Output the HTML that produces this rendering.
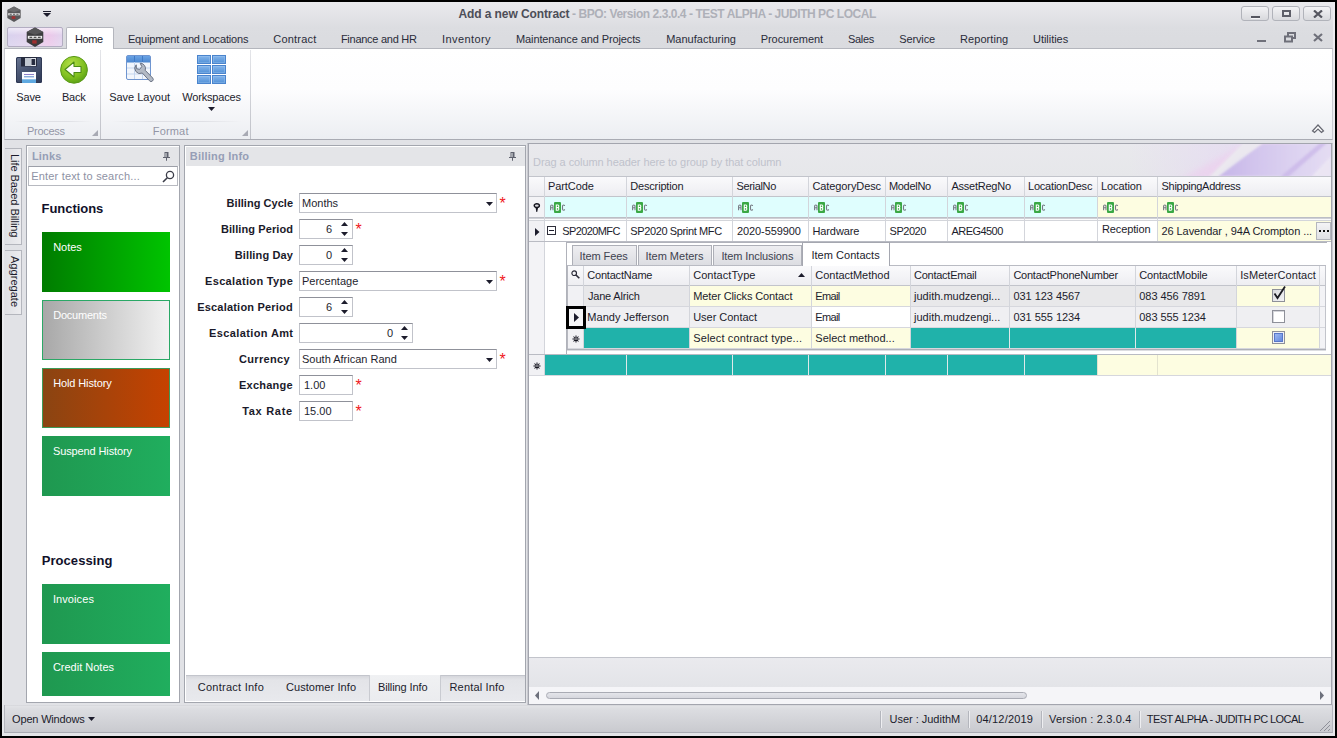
<!DOCTYPE html>
<html><head><meta charset="utf-8">
<style>
*{box-sizing:border-box;margin:0;padding:0}
html,body{width:1337px;height:738px;overflow:hidden;background:#000}
body{font-family:"Liberation Sans",sans-serif;font-size:11px;color:#1e1e2e;position:relative}
.a{position:absolute}
.t{position:absolute;white-space:nowrap;line-height:14px}
#win{left:0;top:0;width:1337px;height:738px;background:#e1e2e6;overflow:hidden}
.blk{position:absolute;background:#000;z-index:50}
#title{left:0;top:0;width:1337px;height:28px;background:linear-gradient(#ebebee,#dcdde1)}
#tabs{left:0;top:28px;width:1337px;height:21px;background:linear-gradient(#dcdde1,#dadbdf)}
#ribbon{left:4px;top:48px;width:1329px;height:92px;background:linear-gradient(#ffffff 0%,#fdfdfe 45%,#eceef2 100%);border:1px solid #b4b6bd;border-left-color:#c9cbd1;border-right-color:#c9cbd1;border-bottom-color:#a9abb3}
.panel{position:absolute;background:#fff;border:1px solid #a3a6ae}
.phead{position:absolute;left:1px;top:1px;right:0;height:19px;background:#e4e5e8}
.phead b{position:absolute;left:5px;top:2px;line-height:14px;color:#969eb6;font-size:11px}
.lbl{position:absolute;white-space:nowrap;font-weight:bold;line-height:14px;color:#1a1a2a}
.inp{position:absolute;background:#fff;border:1px solid #c1c3ca;border-top-color:#8f919a;height:20px}
.inp span{position:absolute;top:2px;line-height:14px;white-space:nowrap}
.star{position:absolute;color:#f01822;font-weight:normal;font-size:16px;line-height:16px}
.tile{position:absolute;left:15px;width:128px;height:60px;color:#fff;font-size:11px}
.tile span{position:absolute;left:11px;top:8px;line-height:14px;white-space:nowrap}
.mt{position:absolute;top:32px;line-height:14px;white-space:nowrap;color:#2a2c3a;font-size:11px}
.wb{top:6px;width:28px;height:15px;border:1px solid #b1b3ba;border-radius:3px;background:linear-gradient(#f3f3f5,#d8d9dd)}
.wb i{position:absolute;background:#55565f}
.sep{top:711px;width:2px;height:17px;border-left:1px solid #b4b6bd;border-right:1px solid #eeeef1}
#tt1{letter-spacing:-0.094px;margin-left:-0.50px}
#tt2{letter-spacing:-0.453px;margin-left:0.00px}
#m0{letter-spacing:-0.386px;margin-left:-0.10px}
#m1{letter-spacing:-0.163px;margin-left:-0.10px}
#m2{letter-spacing:0.203px;margin-left:0.30px}
#m3{letter-spacing:-0.264px;margin-left:-0.10px}
#m4{letter-spacing:0.406px;margin-left:0.00px}
#m5{letter-spacing:-0.112px;margin-left:0.00px}
#m6{letter-spacing:0.006px;margin-left:0.20px}
#m7{letter-spacing:-0.062px;margin-left:-0.30px}
#m8{letter-spacing:-0.346px;margin-left:-0.90px}
#m9{letter-spacing:-0.127px;margin-left:-0.80px}
#m10{letter-spacing:0.066px;margin-left:-1.00px}
#m11{letter-spacing:-0.039px;margin-left:-1.00px}
#r1{letter-spacing:-0.120px;margin-left:0.20px}
#r2{letter-spacing:-0.267px;margin-left:0.00px}
#r3{letter-spacing:-0.023px;margin-left:0.20px}
#r4{letter-spacing:-0.193px;margin-left:0.30px}
#g1{letter-spacing:-0.279px;margin-left:0.00px}
#g2{letter-spacing:0.159px;margin-left:-0.20px}
#ph1{letter-spacing:0.153px;margin-left:-1.00px}
#se{letter-spacing:0.184px;margin-left:0.20px}
#h1{letter-spacing:-0.034px;margin-left:-0.50px}
#t1{letter-spacing:-0.030px;margin-left:0.20px}
#t2{letter-spacing:-0.216px;margin-left:0.20px}
#t3{letter-spacing:-0.117px;margin-left:0.20px}
#t4{letter-spacing:-0.108px;margin-left:-0.10px}
#h2{letter-spacing:0.061px;margin-left:-0.30px}
#t5{letter-spacing:0.093px;margin-left:-0.10px}
#t6{letter-spacing:-0.003px;margin-left:-0.10px}
#ph2{letter-spacing:0.231px;margin-left:-1.30px}
#l0{letter-spacing:0.036px;margin-left:21.60px}
#l1{letter-spacing:0.092px;margin-left:15.90px}
#l2{letter-spacing:0.141px;margin-left:29.70px}
#l3{letter-spacing:0.344px;margin-left:0.00px}
#l4{letter-spacing:0.199px;margin-left:-7.80px}
#l5{letter-spacing:0.374px;margin-left:4.10px}
#l6{letter-spacing:0.325px;margin-left:34.00px}
#l7{letter-spacing:0.241px;margin-left:34.00px}
#l8{letter-spacing:0.707px;margin-left:37.20px}
#b1{letter-spacing:0.247px;margin-left:-0.20px}
#b2{letter-spacing:0.085px;margin-left:-0.10px}
#b3{letter-spacing:-0.097px;margin-left:-0.10px}
#b4{letter-spacing:0.163px;margin-left:-0.50px}
#gp{letter-spacing:-0.076px;margin-left:0.10px}
#mh1{letter-spacing:-0.073px;margin-left:-0.10px}
#mh2{letter-spacing:-0.157px;margin-left:0.20px}
#mh3{letter-spacing:-0.323px;margin-left:0.40px}
#mh4{letter-spacing:-0.092px;margin-left:0.40px}
#mh5{letter-spacing:-0.290px;margin-left:-0.10px}
#mh6{letter-spacing:-0.247px;margin-left:0.50px}
#mh7{letter-spacing:-0.205px;margin-left:0.00px}
#mh8{letter-spacing:-0.099px;margin-left:0.00px}
#mh9{letter-spacing:-0.278px;margin-left:0.50px}
#md1{letter-spacing:-0.598px;margin-left:0.20px}
#md2{letter-spacing:-0.366px;margin-left:0.20px}
#md3{letter-spacing:-0.095px;margin-left:1.00px}
#md4{letter-spacing:-0.086px;margin-left:0.40px}
#md5{letter-spacing:-0.459px;margin-left:0.50px}
#md6{letter-spacing:-0.557px;margin-left:0.50px}
#md8{letter-spacing:-0.105px;margin-left:0.90px}
#md9{letter-spacing:-0.076px;margin-left:0.50px}
#dt0{letter-spacing:-0.067px;margin-left:0.50px}
#dt1{letter-spacing:0.002px;margin-left:0.40px}
#dt2{letter-spacing:-0.098px;margin-left:1.40px}
#dt3{letter-spacing:0.034px;margin-left:0.40px}
#dh1{letter-spacing:-0.206px;margin-left:0.30px}
#dh2{letter-spacing:0.049px;margin-left:0.20px}
#dh3{letter-spacing:-0.031px;margin-left:0.30px}
#dh4{letter-spacing:-0.252px;margin-left:0.00px}
#dh5{letter-spacing:-0.241px;margin-left:0.40px}
#dh6{letter-spacing:-0.171px;margin-left:0.30px}
#dh7{letter-spacing:0.086px;margin-left:0.20px}
#dd0_1{letter-spacing:-0.174px;margin-left:0.90px}
#dd0_2{letter-spacing:-0.114px;margin-left:0.20px}
#dd0_3{letter-spacing:-0.663px;margin-left:0.30px}
#dd0_4{letter-spacing:0.005px;margin-left:0.00px}
#dd0_5{letter-spacing:-0.041px;margin-left:0.40px}
#dd0_6{letter-spacing:-0.058px;margin-left:0.30px}
#dd1_1{letter-spacing:0.025px;margin-left:0.30px}
#dd1_2{letter-spacing:-0.025px;margin-left:0.20px}
#dd1_3{letter-spacing:-0.663px;margin-left:0.30px}
#dd1_4{letter-spacing:0.005px;margin-left:0.00px}
#dd1_5{letter-spacing:-0.041px;margin-left:0.40px}
#dd1_6{letter-spacing:-0.058px;margin-left:0.30px}
#dd2_2{letter-spacing:0.140px;margin-left:0.20px}
#dd2_3{letter-spacing:-0.006px;margin-left:0.30px}
#s0{letter-spacing:-0.183px;margin-left:0.10px}
#s1{letter-spacing:-0.016px;margin-left:-0.50px}
#s2{letter-spacing:0.184px;margin-left:-0.80px}
#s3{letter-spacing:0.171px;margin-left:-0.90px}
#s4{letter-spacing:-0.560px;margin-left:-0.20px}
#v1{letter-spacing:-0.055px;margin-top:-0.90px}
#v2{letter-spacing:0.037px;margin-top:-1.70px}
</style></head><body>
<div id="win" class="a">
<div class="blk" style="left:0;top:0;width:1337px;height:2px"></div>
<div class="blk" style="left:0;top:0;width:2px;height:738px"></div>
<div class="blk" style="left:1335px;top:0;width:2px;height:738px"></div>
<div class="blk" style="left:0;top:736px;width:1337px;height:2px"></div>
<div id="title" class="a"></div>
<div id="tabs" class="a"></div>
<!-- app icon -->
<svg class="a" style="left:6px;top:5.5px" width="16" height="17" viewBox="0 0 18 19"><polygon points="9,0.5 16.5,4.5 16.5,13.5 9,18 1.5,13.5 1.5,4.5" fill="#58585a"/><polygon points="9,0.5 16.5,4.5 9,7 1.5,4.5" fill="#6c6c6e"/><rect x="2.5" y="8" width="13" height="2.4" fill="#e8e8e8"/><rect x="4" y="8.7" width="2.5" height="1" fill="#444"/><rect x="7.8" y="8.7" width="2.5" height="1" fill="#444"/><rect x="11.6" y="8.7" width="2.5" height="1" fill="#444"/><rect x="6.5" y="11.5" width="4" height="3" fill="#a03030"/></svg>
<!-- qat arrow -->
<div class="a" style="left:43px;top:11px;width:8px;height:1px;background:#1c1c2c"></div>
<div class="a" style="left:43px;top:13px;width:0;height:0;border-left:4px solid transparent;border-right:4px solid transparent;border-top:4px solid #1c1c2c"></div>
<!-- title text -->
<div class="t" style="left:459px;top:7px;font-size:12px;font-weight:bold;color:#4d4e58" id="tt1">Add a new Contract</div>
<div class="t" style="left:572px;top:7px;font-size:12px;font-weight:bold;color:#aeb0b8" id="tt2">- BPO: Version 2.3.0.4 - TEST ALPHA - JUDITH PC LOCAL</div>
<!-- window buttons -->
<div class="a wb" style="left:1241px"><i style="left:9px;top:9px;width:9px;height:2px;box-shadow:0 1px 0 #f4f4f6"></i></div>
<div class="a wb" style="left:1272px"><i style="left:9px;top:3px;width:9px;height:7px;background:none;border:2px solid #5d5e68"></i></div>
<div class="a wb" style="left:1303px"><svg class="a" style="left:9px;top:3px" width="10" height="8" viewBox="0 0 10 8"><path d="M1 0.5 L9 7.5 M9 0.5 L1 7.5" stroke="#55565f" stroke-width="2.2"/></svg></div>
<!-- mdi buttons -->
<div class="a" style="left:1257px;top:40px;width:9px;height:2px;background:#6f707a"></div>
<svg class="a" style="left:1284px;top:32px" width="12" height="11" viewBox="0 0 12 11"><rect x="4" y="1" width="7" height="5" fill="none" stroke="#6f707a" stroke-width="2"/><rect x="1" y="4.5" width="7" height="5" fill="#dbdce0" stroke="#6f707a" stroke-width="2"/></svg>
<svg class="a" style="left:1313px;top:33px" width="10" height="9" viewBox="0 0 10 9"><path d="M1 1 L9 8 M9 1 L1 8" stroke="#6f707a" stroke-width="2.2"/></svg>
<!-- app button -->
<div class="a" style="left:7px;top:27px;width:56px;height:20px;border:1px solid #b3adc2;border-radius:2px;background:linear-gradient(90deg,#d9d2ee 0%,#e3d3ee 45%,#ecc8ea 75%,#e2d4ee 100%)"></div>
<div class="a" style="left:8px;top:28px;width:54px;height:18px;border-radius:2px;background:linear-gradient(rgba(255,255,255,.55),rgba(255,255,255,0) 40%,rgba(255,255,255,.15))"></div>
<svg class="a" style="left:25px;top:27px" width="20" height="21" viewBox="0 0 18 19"><polygon points="9,0.5 16.5,4.5 16.5,13.5 9,18 1.5,13.5 1.5,4.5" fill="#3c3c3e"/><polygon points="9,0.5 16.5,4.5 9,7 1.5,4.5" fill="#555557"/><rect x="2.5" y="8" width="13" height="2.6" fill="#f0f0f0"/><rect x="4" y="8.8" width="2.5" height="1" fill="#333"/><rect x="7.8" y="8.8" width="2.5" height="1" fill="#333"/><rect x="11.6" y="8.8" width="2.5" height="1" fill="#333"/><rect x="6.5" y="12" width="4" height="3" fill="#a03030"/></svg>
<!-- ribbon body -->
<div id="ribbon" class="a"></div>
<!-- Home tab -->
<div class="a" style="left:66px;top:27px;width:48px;height:22px;background:#fff;border:1px solid #b4b6bd;border-bottom:none;border-radius:2px 2px 0 0"></div>
<div class="mt" style="left:75px;color:#1c1c2c" id="m0">Home</div>
<div class="mt" style="left:128px" id="m1">Equipment and Locations</div>
<div class="mt" style="left:273px" id="m2">Contract</div>
<div class="mt" style="left:341px" id="m3">Finance and HR</div>
<div class="mt" style="left:442px" id="m4">Inventory</div>
<div class="mt" style="left:516px" id="m5">Maintenance and Projects</div>
<div class="mt" style="left:666px" id="m6">Manufacturing</div>
<div class="mt" style="left:761px" id="m7">Procurement</div>
<div class="mt" style="left:849px" id="m8">Sales</div>
<div class="mt" style="left:900px" id="m9">Service</div>
<div class="mt" style="left:961px" id="m10">Reporting</div>
<div class="mt" style="left:1034px" id="m11">Utilities</div>
<!-- ribbon groups -->
<div class="a" style="left:100px;top:50px;width:1px;height:89px;background:linear-gradient(#e4e5e9,#bfc1c8)"></div>
<div class="a" style="left:250px;top:50px;width:1px;height:89px;background:linear-gradient(#e4e5e9,#bfc1c8)"></div>
<div class="a" style="left:14px;top:121px;width:78px;height:1px;background:linear-gradient(90deg,rgba(210,212,218,0),#dfe0e5 30%,#dfe0e5 70%,rgba(210,212,218,0))"></div>
<div class="a" style="left:112px;top:121px;width:130px;height:1px;background:linear-gradient(90deg,rgba(210,212,218,0),#dfe0e5 30%,#dfe0e5 70%,rgba(210,212,218,0))"></div>
<div class="t" style="left:27px;top:124px;color:#9396a6" id="g1">Process</div>
<div class="t" style="left:153px;top:124px;color:#9396a6" id="g2">Format</div>
<svg class="a" style="left:92px;top:130px" width="6" height="6"><polygon points="6,0 6,6 0,6" fill="#a8aab4"/></svg>
<svg class="a" style="left:242px;top:130px" width="6" height="6"><polygon points="6,0 6,6 0,6" fill="#a8aab4"/></svg>
<div class="t" style="left:16px;top:90px;color:#1c1c2c" id="r1">Save</div>
<div class="t" style="left:62px;top:90px;color:#1c1c2c" id="r2">Back</div>
<div class="t" style="left:109px;top:90px;color:#1c1c2c" id="r3">Save Layout</div>
<div class="t" style="left:182px;top:90px;color:#1c1c2c" id="r4">Workspaces</div>
<svg class="a" style="left:208px;top:107px" width="7" height="4"><polygon points="0,0 7,0 3.5,4" fill="#1c1c2c"/></svg>
<!-- save icon -->
<svg class="a" style="left:16px;top:57px" width="26" height="26" viewBox="0 0 26 26">
<defs><linearGradient id="sv" x1="0" y1="0" x2="0.6" y2="1"><stop offset="0" stop-color="#6a7692"/><stop offset="0.5" stop-color="#4b5774"/><stop offset="1" stop-color="#323d5a"/></linearGradient></defs>
<rect x="0" y="0" width="26" height="26" rx="1.5" fill="url(#sv)"/>
<rect x="0.5" y="0.5" width="25" height="25" rx="1.5" fill="none" stroke="#2f3954" stroke-width="1"/>
<rect x="5" y="0" width="16" height="9.5" fill="#262b3e"/>
<rect x="9" y="1" width="11" height="8" fill="#e3e6ec"/><rect x="9" y="1" width="6" height="8" fill="#c2c8d2"/>
<rect x="15.5" y="2" width="3.7" height="6" fill="#262b3e"/>
<rect x="6" y="15" width="14" height="11" fill="#fbfcfe"/>
<rect x="8" y="17" width="10" height="1" fill="#8d7fc8"/><rect x="8" y="19.3" width="10" height="1" fill="#5b8bc9"/>
<rect x="6" y="22.3" width="14" height="3.7" fill="#5ea8e0"/>
</svg>
<!-- back icon -->
<svg class="a" style="left:59px;top:55px" width="30" height="30" viewBox="0 0 30 30">
<defs><radialGradient id="bk" cx="0.4" cy="0.3" r="0.8"><stop offset="0" stop-color="#b5e04a"/><stop offset="0.6" stop-color="#7fbf1f"/><stop offset="1" stop-color="#4f9612"/></radialGradient></defs>
<circle cx="15" cy="14.8" r="13.4" fill="url(#bk)" stroke="#5a9a18" stroke-width="1"/>
<path d="M6 14.5 L15 7 L15 11.5 L22 11.5 L22 17.5 L15 17.5 L15 22 Z" fill="#fff" stroke="#4b8a16" stroke-width="1.1" stroke-linejoin="round"/>
</svg>
<!-- save layout icon -->
<svg class="a" style="left:125px;top:54px" width="32" height="32" viewBox="0 0 32 32">
<defs><linearGradient id="slh" x1="0" y1="0" x2="0" y2="1"><stop offset="0" stop-color="#6aa3e4"/><stop offset="1" stop-color="#4a86cf"/></linearGradient></defs>
<rect x="1.5" y="1.5" width="24" height="24" rx="1.5" fill="#f2f6fc" stroke="#6f95d0"/>
<rect x="2" y="2" width="23" height="6.5" fill="url(#slh)"/>
<path d="M2 14 H25 M2 20 H25 M9.5 8 V25 M17.5 8 V25" stroke="#c5d6ee" stroke-width="1"/>
<path d="M9.5 2 V8 M17.5 2 V8" stroke="#3f7ac6" stroke-width="1"/>
<path d="M11.2 10.8 A5.2 5.2 0 0 0 17.3 19.0 L24.5 26.8 A2.1 2.1 0 0 0 27.7 24 L20.2 16.3 A5.2 5.2 0 0 0 15.2 9.3 L16.8 12.6 L14.6 15.4 L11.4 14.6 Z" fill="#b3bac5" stroke="#6b7384" stroke-width="1" stroke-linejoin="round"/>
</svg>
<!-- workspaces icon -->
<svg class="a" style="left:197px;top:55px" width="29" height="29" viewBox="0 0 29 29">
<defs><linearGradient id="ws" x1="0" y1="0" x2="0" y2="1"><stop offset="0" stop-color="#86b6ec"/><stop offset="1" stop-color="#4f8fd6"/></linearGradient></defs>
<g fill="url(#ws)" stroke="#4a84cd" stroke-width="1"><rect x="0.5" y="0.5" width="13" height="8"/><rect x="15.5" y="0.5" width="13" height="8"/><rect x="0.5" y="10.5" width="13" height="8"/><rect x="15.5" y="10.5" width="13" height="8"/><rect x="0.5" y="20.5" width="13" height="8"/><rect x="15.5" y="20.5" width="13" height="8"/></g>
<g fill="none" stroke="#a9cdf4" stroke-width="1" opacity=".35"><rect x="1.5" y="1.5" width="11" height="6"/><rect x="16.5" y="1.5" width="11" height="6"/><rect x="1.5" y="11.5" width="11" height="6"/><rect x="16.5" y="11.5" width="11" height="6"/><rect x="1.5" y="21.5" width="11" height="6"/><rect x="16.5" y="21.5" width="11" height="6"/></g>
</svg>
<!-- collapse chevron -->
<svg class="a" style="left:1311px;top:123px" width="14" height="11" viewBox="0 0 14 11"><path d="M1.5 8 L7 2 L12.5 8 L10.5 9.5 L7 6 L3.5 9.5 Z" fill="#fff" stroke="#666872" stroke-width="1.2"/></svg>
<!-- vertical tabs -->
<div class="a" style="left:5px;top:148px;width:17px;height:97px;background:linear-gradient(90deg,#dfe0e4,#ececef);border:1px solid #b4b6bd;border-left:none"></div>
<div class="a" style="left:5px;top:250px;width:17px;height:65px;background:linear-gradient(90deg,#dfe0e4,#ececef);border:1px solid #b4b6bd;border-left:none"></div>
<div class="t" style="left:21.5px;top:155px;transform-origin:0 0;transform:rotate(90deg);font-size:11px;color:#1c1c2c" id="v1">Life Based Billing</div>
<div class="t" style="left:21.5px;top:258px;transform-origin:0 0;transform:rotate(90deg);font-size:11px;color:#1c1c2c" id="v2">Aggregate</div>
<!-- Links panel -->
<div class="panel" style="left:26px;top:145px;width:154px;height:558px;overflow:hidden">
 <div class="phead"><b id="ph1">Links</b></div>
 <svg class="a" style="left:136px;top:6px" width="7" height="9" viewBox="0 0 7 9"><path d="M1.5 0 H5.5 V5 H7 V6 H4 V8.7 H3 V6 H0 V5 H1.5 Z" fill="#5f626e"/><rect x="2.5" y="1" width="1" height="4" fill="#e6e7ea"/></svg>
 <div class="a" style="left:1px;top:20px;width:150px;height:20px;border:1px solid #b7b9c0;border-top-color:#9c9fa8;background:#fff"></div>
 <div class="t" style="left:4px;top:23px;color:#8e92a4" id="se">Enter text to search...</div>
 <svg class="a" style="left:135px;top:24px" width="13" height="13" viewBox="0 0 13 13"><circle cx="8" cy="5" r="3.6" fill="none" stroke="#3a3c48" stroke-width="1.3"/><path d="M5.3 7.7 L1 12" stroke="#3a3c48" stroke-width="1.6"/></svg>
 <div class="t" style="left:15px;top:54px;font-size:13px;font-weight:bold;line-height:18px;color:#10102a" id="h1">Functions</div>
 <div class="tile" style="top:86px;background:linear-gradient(90deg,#007c00,#00c400)"><span id="t1">Notes</span></div>
 <div class="tile" style="top:154px;background:linear-gradient(90deg,#a8a8a8,#f2f2f2);border:1px solid #2aa866"><span style="left:10px;top:7px" id="t2">Documents</span></div>
 <div class="tile" style="top:222px;background:linear-gradient(90deg,#8a4412,#c64200);border:1px solid #3d9a58"><span style="left:10px;top:7px" id="t3">Hold History</span></div>
 <div class="tile" style="top:290px;background:linear-gradient(90deg,#1f9850,#20ae5e)"><span id="t4">Suspend History</span></div>
 <div class="t" style="left:15px;top:406px;font-size:13px;font-weight:bold;line-height:18px;color:#10102a" id="h2">Processing</div>
 <div class="tile" style="top:438px;background:linear-gradient(90deg,#1f9850,#20ae5e)"><span id="t5">Invoices</span></div>
 <div class="tile" style="top:506px;background:linear-gradient(90deg,#1f9850,#20ae5e)"><span id="t6">Credit Notes</span></div>
 <div class="a" style="left:0;top:550px;width:153px;height:7px;background:#fff"></div>
</div>
<!-- Billing Info panel -->
<div class="panel" style="left:184px;top:145px;width:342px;height:558px;overflow:hidden">
 <div class="phead"><b id="ph2">Billing Info</b></div>
 <svg class="a" style="left:324px;top:6px" width="7" height="9" viewBox="0 0 7 9"><path d="M1.5 0 H5.5 V5 H7 V6 H4 V8.7 H3 V6 H0 V5 H1.5 Z" fill="#5f626e"/><rect x="2.5" y="1" width="1" height="4" fill="#e6e7ea"/></svg>
 <div class="lbl" style="left:20px;top:50px" id="l0">Billing Cycle</div>
 <div class="inp" style="left:114px;top:47px;width:198px"><span style="left:2px" id="f0">Months</span><svg class="a" style="left:186px;top:8px" width="7" height="4"><polygon points="0,0 7,0 3.5,4" fill="#1c1c2c"/></svg></div>
 <div class="star" style="left:314.5px;top:50px">*</div>
 <div class="lbl" style="left:20px;top:76px" id="l1">Billing Period</div>
 <div class="inp" style="left:114px;top:73px;width:54px"><span style="right:20px" id="f1">6</span><svg class="a" style="left:41px;top:2px" width="7" height="4"><polygon points="3.5,0 7,4 0,4" fill="#1c1c2c"/></svg><svg class="a" style="left:41px;top:12px" width="7" height="4"><polygon points="0,0 7,0 3.5,4" fill="#1c1c2c"/></svg></div>
 <div class="star" style="left:170.5px;top:76px">*</div>
 <div class="lbl" style="left:20px;top:102px" id="l2">Billing Day</div>
 <div class="inp" style="left:114px;top:99px;width:54px"><span style="right:20px" id="f2">0</span><svg class="a" style="left:41px;top:2px" width="7" height="4"><polygon points="3.5,0 7,4 0,4" fill="#1c1c2c"/></svg><svg class="a" style="left:41px;top:12px" width="7" height="4"><polygon points="0,0 7,0 3.5,4" fill="#1c1c2c"/></svg></div>
 <div class="lbl" style="left:20px;top:128px" id="l3">Escalation Type</div>
 <div class="inp" style="left:114px;top:125px;width:198px"><span style="left:2px" id="f3">Percentage</span><svg class="a" style="left:186px;top:8px" width="7" height="4"><polygon points="0,0 7,0 3.5,4" fill="#1c1c2c"/></svg></div>
 <div class="star" style="left:314.5px;top:128px">*</div>
 <div class="lbl" style="left:20px;top:154px" id="l4">Escalation Period</div>
 <div class="inp" style="left:114px;top:151px;width:54px"><span style="right:20px" id="f4">6</span><svg class="a" style="left:41px;top:2px" width="7" height="4"><polygon points="3.5,0 7,4 0,4" fill="#1c1c2c"/></svg><svg class="a" style="left:41px;top:12px" width="7" height="4"><polygon points="0,0 7,0 3.5,4" fill="#1c1c2c"/></svg></div>
 <div class="lbl" style="left:20px;top:180px" id="l5">Escalation Amt</div>
 <div class="inp" style="left:114px;top:177px;width:114px"><span style="right:19px" id="f5">0</span><svg class="a" style="left:101px;top:2px" width="7" height="4"><polygon points="3.5,0 7,4 0,4" fill="#1c1c2c"/></svg><svg class="a" style="left:101px;top:12px" width="7" height="4"><polygon points="0,0 7,0 3.5,4" fill="#1c1c2c"/></svg></div>
 <div class="lbl" style="left:20px;top:206px" id="l6">Currency</div>
 <div class="inp" style="left:114px;top:203px;width:198px"><span style="left:2px" id="f6">South African Rand</span><svg class="a" style="left:186px;top:8px" width="7" height="4"><polygon points="0,0 7,0 3.5,4" fill="#1c1c2c"/></svg></div>
 <div class="star" style="left:314.5px;top:206px">*</div>
 <div class="lbl" style="left:20px;top:232px" id="l7">Exchange</div>
 <div class="inp" style="left:114px;top:229px;width:54px"><span style="left:4px" id="f7">1.00</span></div>
 <div class="star" style="left:170.5px;top:232px">*</div>
 <div class="lbl" style="left:20px;top:258px" id="l8">Tax Rate</div>
 <div class="inp" style="left:114px;top:255px;width:54px"><span style="left:4px" id="f8">15.00</span></div>
 <div class="star" style="left:170.5px;top:258px">*</div>
 <div class="a" style="left:1px;top:529px;width:339px;height:26px;background:linear-gradient(#d6d7dc 0,#e3e4e8 4px,#e8e9ed 100%);border-top:1px solid #c3c5cc"></div>
 <div class="a" style="left:184px;top:529px;width:72px;height:26px;background:linear-gradient(#f0f1f3,#ebecef);border-left:1px solid #c9cbd1;border-right:1px solid #c9cbd1"></div>
 <div class="t" style="left:13px;top:534px;color:#1c1c2c" id="b1">Contract Info</div>
 <div class="t" style="left:101px;top:534px;color:#1c1c2c" id="b2">Customer Info</div>
 <div class="t" style="left:193px;top:534px;color:#1c1c2c" id="b3">Billing Info</div>
 <div class="t" style="left:265px;top:534px;color:#1c1c2c" id="b4">Rental Info</div>
</div>
<!-- Grid -->
<div class="a" style="left:527px;top:143px;width:806px;height:562px;background:#fff;border:2px solid #c9cad0;border-top-width:1px;border-bottom-width:1px;border-top-color:#a3a6ae;border-bottom-color:#a3a6ae"></div>
<div class="a" style="left:528px;top:143px;width:804px;height:562px;border:1px solid #a3a5ae"></div>
<div class="a" style="left:529px;top:144px;width:802px;height:32px;background:linear-gradient(#e9e9ed,#e6e7ea);overflow:hidden">
<svg class="a" style="left:0;top:0" width="802" height="32" viewBox="0 0 802 32"><defs><linearGradient id="sw0" x1="600" y1="0" x2="802" y2="0" gradientUnits="userSpaceOnUse"><stop offset="0" stop-color="#e6dcf1" stop-opacity="0"/><stop offset="0.4" stop-color="#e6dcf1" stop-opacity=".7"/><stop offset="1" stop-color="#e4dbf2" stop-opacity="1"/></linearGradient><linearGradient id="sw2" x1="690" y1="0" x2="802" y2="0" gradientUnits="userSpaceOnUse"><stop offset="0" stop-color="#c6b5e8"/><stop offset="0.35" stop-color="#d3c6ed"/><stop offset="0.7" stop-color="#ddd3f1"/><stop offset="1" stop-color="#e4dcf3"/></linearGradient><filter id="bl3" x="-20%" y="-50%" width="140%" height="200%"><feGaussianBlur stdDeviation="3"/></filter><filter id="bl1" x="-20%" y="-50%" width="140%" height="200%"><feGaussianBlur stdDeviation="0.8"/></filter></defs><rect x="600" y="0" width="202" height="32" fill="url(#sw0)"/><polygon points="650,36 722,-4 768,-4 694,36" fill="#ecd0ee" opacity=".75" filter="url(#bl3)"/><path d="M688 32 C703 18 718 8 733 0 L802 0 L802 32 Z" fill="url(#sw2)" filter="url(#bl1)"/><polygon points="680,33 689,33 734,-1 714,-1" fill="#ececf0" opacity=".85" filter="url(#bl1)"/><polygon points="751,33 759,33 798,-1 791,-1" fill="#c9b6e8" opacity=".75" filter="url(#bl1)"/><polygon points="782,33 802,12 802,33" fill="#ece7f4" opacity=".9" filter="url(#bl1)"/></svg>
</div>
<div class="t" style="left:533px;top:155px;color:#bfc2cb" id="gp">Drag a column header here to group by that column</div>
<div class="a" style="left:529px;top:176px;width:802px;height:1px;background:#c2c4cb"></div>
<div class="a" style="left:529px;top:177px;width:802px;height:19px;background:linear-gradient(#fafafc,#ededf1)"></div>
<div class="a" style="left:529px;top:196px;width:802px;height:1px;background:#c2c4cb"></div>
<div class="a" style="left:529px;top:197px;width:16px;height:21px;background:#f3f3f6"></div>
<div class="a" style="left:545px;top:197px;width:553px;height:21px;background:#dffefe"></div>
<div class="a" style="left:1098px;top:197px;width:233px;height:21px;background:#fdfde1"></div>
<div class="a" style="left:529px;top:217px;width:802px;height:1px;background:#bcbec5"></div>
<div class="a" style="left:529px;top:218px;width:802px;height:1px;background:#cfd0d6"></div>
<div class="a" style="left:529px;top:219px;width:802px;height:1px;background:#fbfbfc"></div>
<div class="a" style="left:529px;top:220px;width:802px;height:1px;background:#d3d5da"></div>
<div class="a" style="left:529px;top:221px;width:16px;height:20px;background:#f1f1f4"></div>
<div class="a" style="left:1158px;top:221px;width:173px;height:20px;background:#fdfde1"></div>
<div class="a" style="left:529px;top:241px;width:802px;height:1px;background:#b9bbc3"></div>
<div class="a" style="left:544px;top:177px;width:1px;height:64px;background:#d3d5db"></div>
<div class="t" style="left:548px;top:179px;color:#1c1c2c" id="mh1">PartCode</div>
<svg class="a" style="left:550px;top:202px" width="17" height="11" viewBox="0 0 17 11"><rect x="4" y="0" width="7" height="11" rx="1" fill="#3aa845"/><path d="M0.6 8.2 V4.2 Q0.6 3 1.8 3 Q3 3 3 4.2 V8.2 M0.6 5.8 H3" stroke="#777a84" stroke-width="1.1" fill="none"/><path d="M6.3 3 V8.2 H8 Q8.8 8.2 8.8 7 Q8.8 5.7 8 5.6 Q8.8 5.5 8.8 4.2 Q8.8 3 8 3 Z M6.3 5.6 H8" stroke="#fff" stroke-width="1.1" fill="none"/><path d="M14.6 4 Q14.6 3 13.6 3 Q12.5 3 12.5 4.2 V7 Q12.5 8.2 13.6 8.2 Q14.6 8.2 14.6 7.2" stroke="#777a84" stroke-width="1.1" fill="none"/></svg>
<div class="t" style="left:562px;top:224px;color:#1c1c2c" id="md1">SP2020MFC</div>
<div class="a" style="left:626px;top:177px;width:1px;height:64px;background:#d3d5db"></div>
<div class="t" style="left:630px;top:179px;color:#1c1c2c" id="mh2">Description</div>
<svg class="a" style="left:632px;top:202px" width="17" height="11" viewBox="0 0 17 11"><rect x="4" y="0" width="7" height="11" rx="1" fill="#3aa845"/><path d="M0.6 8.2 V4.2 Q0.6 3 1.8 3 Q3 3 3 4.2 V8.2 M0.6 5.8 H3" stroke="#777a84" stroke-width="1.1" fill="none"/><path d="M6.3 3 V8.2 H8 Q8.8 8.2 8.8 7 Q8.8 5.7 8 5.6 Q8.8 5.5 8.8 4.2 Q8.8 3 8 3 Z M6.3 5.6 H8" stroke="#fff" stroke-width="1.1" fill="none"/><path d="M14.6 4 Q14.6 3 13.6 3 Q12.5 3 12.5 4.2 V7 Q12.5 8.2 13.6 8.2 Q14.6 8.2 14.6 7.2" stroke="#777a84" stroke-width="1.1" fill="none"/></svg>
<div class="t" style="left:630px;top:224px;color:#1c1c2c" id="md2">SP2020 Sprint MFC</div>
<div class="a" style="left:732px;top:177px;width:1px;height:64px;background:#d3d5db"></div>
<div class="t" style="left:736px;top:179px;color:#1c1c2c" id="mh3">SerialNo</div>
<svg class="a" style="left:738px;top:202px" width="17" height="11" viewBox="0 0 17 11"><rect x="4" y="0" width="7" height="11" rx="1" fill="#3aa845"/><path d="M0.6 8.2 V4.2 Q0.6 3 1.8 3 Q3 3 3 4.2 V8.2 M0.6 5.8 H3" stroke="#777a84" stroke-width="1.1" fill="none"/><path d="M6.3 3 V8.2 H8 Q8.8 8.2 8.8 7 Q8.8 5.7 8 5.6 Q8.8 5.5 8.8 4.2 Q8.8 3 8 3 Z M6.3 5.6 H8" stroke="#fff" stroke-width="1.1" fill="none"/><path d="M14.6 4 Q14.6 3 13.6 3 Q12.5 3 12.5 4.2 V7 Q12.5 8.2 13.6 8.2 Q14.6 8.2 14.6 7.2" stroke="#777a84" stroke-width="1.1" fill="none"/></svg>
<div class="t" style="left:736px;top:224px;color:#1c1c2c" id="md3">2020-559900</div>
<div class="a" style="left:808px;top:177px;width:1px;height:64px;background:#d3d5db"></div>
<div class="t" style="left:812px;top:179px;color:#1c1c2c" id="mh4">CategoryDesc</div>
<svg class="a" style="left:814px;top:202px" width="17" height="11" viewBox="0 0 17 11"><rect x="4" y="0" width="7" height="11" rx="1" fill="#3aa845"/><path d="M0.6 8.2 V4.2 Q0.6 3 1.8 3 Q3 3 3 4.2 V8.2 M0.6 5.8 H3" stroke="#777a84" stroke-width="1.1" fill="none"/><path d="M6.3 3 V8.2 H8 Q8.8 8.2 8.8 7 Q8.8 5.7 8 5.6 Q8.8 5.5 8.8 4.2 Q8.8 3 8 3 Z M6.3 5.6 H8" stroke="#fff" stroke-width="1.1" fill="none"/><path d="M14.6 4 Q14.6 3 13.6 3 Q12.5 3 12.5 4.2 V7 Q12.5 8.2 13.6 8.2 Q14.6 8.2 14.6 7.2" stroke="#777a84" stroke-width="1.1" fill="none"/></svg>
<div class="t" style="left:812px;top:224px;color:#1c1c2c" id="md4">Hardware</div>
<div class="a" style="left:885px;top:177px;width:1px;height:64px;background:#d3d5db"></div>
<div class="t" style="left:889px;top:179px;color:#1c1c2c" id="mh5">ModelNo</div>
<svg class="a" style="left:891px;top:202px" width="17" height="11" viewBox="0 0 17 11"><rect x="4" y="0" width="7" height="11" rx="1" fill="#3aa845"/><path d="M0.6 8.2 V4.2 Q0.6 3 1.8 3 Q3 3 3 4.2 V8.2 M0.6 5.8 H3" stroke="#777a84" stroke-width="1.1" fill="none"/><path d="M6.3 3 V8.2 H8 Q8.8 8.2 8.8 7 Q8.8 5.7 8 5.6 Q8.8 5.5 8.8 4.2 Q8.8 3 8 3 Z M6.3 5.6 H8" stroke="#fff" stroke-width="1.1" fill="none"/><path d="M14.6 4 Q14.6 3 13.6 3 Q12.5 3 12.5 4.2 V7 Q12.5 8.2 13.6 8.2 Q14.6 8.2 14.6 7.2" stroke="#777a84" stroke-width="1.1" fill="none"/></svg>
<div class="t" style="left:889px;top:224px;color:#1c1c2c" id="md5">SP2020</div>
<div class="a" style="left:947px;top:177px;width:1px;height:64px;background:#d3d5db"></div>
<div class="t" style="left:951px;top:179px;color:#1c1c2c" id="mh6">AssetRegNo</div>
<svg class="a" style="left:953px;top:202px" width="17" height="11" viewBox="0 0 17 11"><rect x="4" y="0" width="7" height="11" rx="1" fill="#3aa845"/><path d="M0.6 8.2 V4.2 Q0.6 3 1.8 3 Q3 3 3 4.2 V8.2 M0.6 5.8 H3" stroke="#777a84" stroke-width="1.1" fill="none"/><path d="M6.3 3 V8.2 H8 Q8.8 8.2 8.8 7 Q8.8 5.7 8 5.6 Q8.8 5.5 8.8 4.2 Q8.8 3 8 3 Z M6.3 5.6 H8" stroke="#fff" stroke-width="1.1" fill="none"/><path d="M14.6 4 Q14.6 3 13.6 3 Q12.5 3 12.5 4.2 V7 Q12.5 8.2 13.6 8.2 Q14.6 8.2 14.6 7.2" stroke="#777a84" stroke-width="1.1" fill="none"/></svg>
<div class="t" style="left:951px;top:224px;color:#1c1c2c" id="md6">AREG4500</div>
<div class="a" style="left:1024px;top:177px;width:1px;height:64px;background:#d3d5db"></div>
<div class="t" style="left:1028px;top:179px;color:#1c1c2c" id="mh7">LocationDesc</div>
<svg class="a" style="left:1030px;top:202px" width="17" height="11" viewBox="0 0 17 11"><rect x="4" y="0" width="7" height="11" rx="1" fill="#3aa845"/><path d="M0.6 8.2 V4.2 Q0.6 3 1.8 3 Q3 3 3 4.2 V8.2 M0.6 5.8 H3" stroke="#777a84" stroke-width="1.1" fill="none"/><path d="M6.3 3 V8.2 H8 Q8.8 8.2 8.8 7 Q8.8 5.7 8 5.6 Q8.8 5.5 8.8 4.2 Q8.8 3 8 3 Z M6.3 5.6 H8" stroke="#fff" stroke-width="1.1" fill="none"/><path d="M14.6 4 Q14.6 3 13.6 3 Q12.5 3 12.5 4.2 V7 Q12.5 8.2 13.6 8.2 Q14.6 8.2 14.6 7.2" stroke="#777a84" stroke-width="1.1" fill="none"/></svg>
<div class="a" style="left:1097px;top:177px;width:1px;height:64px;background:#d3d5db"></div>
<div class="t" style="left:1101px;top:179px;color:#1c1c2c" id="mh8">Location</div>
<svg class="a" style="left:1103px;top:202px" width="17" height="11" viewBox="0 0 17 11"><rect x="4" y="0" width="7" height="11" rx="1" fill="#3aa845"/><path d="M0.6 8.2 V4.2 Q0.6 3 1.8 3 Q3 3 3 4.2 V8.2 M0.6 5.8 H3" stroke="#777a84" stroke-width="1.1" fill="none"/><path d="M6.3 3 V8.2 H8 Q8.8 8.2 8.8 7 Q8.8 5.7 8 5.6 Q8.8 5.5 8.8 4.2 Q8.8 3 8 3 Z M6.3 5.6 H8" stroke="#fff" stroke-width="1.1" fill="none"/><path d="M14.6 4 Q14.6 3 13.6 3 Q12.5 3 12.5 4.2 V7 Q12.5 8.2 13.6 8.2 Q14.6 8.2 14.6 7.2" stroke="#777a84" stroke-width="1.1" fill="none"/></svg>
<div class="t" style="left:1101px;top:222px;color:#1c1c2c" id="md8">Reception</div>
<div class="a" style="left:1157px;top:177px;width:1px;height:64px;background:#d3d5db"></div>
<div class="t" style="left:1161px;top:179px;color:#1c1c2c" id="mh9">ShippingAddress</div>
<svg class="a" style="left:1163px;top:202px" width="17" height="11" viewBox="0 0 17 11"><rect x="4" y="0" width="7" height="11" rx="1" fill="#3aa845"/><path d="M0.6 8.2 V4.2 Q0.6 3 1.8 3 Q3 3 3 4.2 V8.2 M0.6 5.8 H3" stroke="#777a84" stroke-width="1.1" fill="none"/><path d="M6.3 3 V8.2 H8 Q8.8 8.2 8.8 7 Q8.8 5.7 8 5.6 Q8.8 5.5 8.8 4.2 Q8.8 3 8 3 Z M6.3 5.6 H8" stroke="#fff" stroke-width="1.1" fill="none"/><path d="M14.6 4 Q14.6 3 13.6 3 Q12.5 3 12.5 4.2 V7 Q12.5 8.2 13.6 8.2 Q14.6 8.2 14.6 7.2" stroke="#777a84" stroke-width="1.1" fill="none"/></svg>
<div class="t" style="left:1161px;top:224px;color:#1c1c2c" id="md9">26 Lavendar , 94A Crompton ...</div>
<svg class="a" style="left:533px;top:203px" width="8" height="10" viewBox="0 0 8 10"><ellipse cx="3.8" cy="2.6" rx="2.6" ry="1.9" fill="#d8d8dc" stroke="#15151f" stroke-width="1.4"/><path d="M2.4 4 H5.2 L4.2 9 H3.4 Z" fill="#15151f"/></svg>
<svg class="a" style="left:535px;top:227.5px" width="5" height="8"><polygon points="0,0 4.5,4 0,8" fill="#1c1c2c"/></svg>
<div class="a" style="left:547px;top:226px;width:9px;height:9px;border:1px solid #2e2e3a;background:#fff"></div><div class="a" style="left:549px;top:230px;width:5px;height:1px;background:#1c1c2c"></div>
<div class="a" style="left:1316px;top:222px;width:15px;height:18px;background:linear-gradient(#f4f4f6,#dfe0e4);border:1px solid #b4b6bd"></div>
<div class="a" style="left:1319px;top:230px;width:2px;height:2px;background:#111"></div>
<div class="a" style="left:1323px;top:230px;width:2px;height:2px;background:#111"></div>
<div class="a" style="left:1327px;top:230px;width:2px;height:2px;background:#111"></div>
<div class="a" style="left:529px;top:242px;width:16px;height:113px;background:#f3f3f6"></div>
<div class="a" style="left:544px;top:242px;width:1px;height:113px;background:#d3d5db"></div>
<div class="a" style="left:566px;top:242px;width:761px;height:112px;background:#fff;border:1px solid #b0b2ba;border-right:none;border-bottom:none"></div>
<div class="a" style="left:567px;top:265px;width:759px;height:1px;background:#b9bbc3"></div>
<div class="a" style="left:572px;top:245px;width:65px;height:20px;background:linear-gradient(#eeeef1,#dcdde2);border:1px solid #adafb7;border-bottom:none"></div>
<div class="t" style="left:579px;top:249px;color:#40424f" id="dt0">Item Fees</div>
<div class="a" style="left:638px;top:245px;width:74px;height:20px;background:linear-gradient(#eeeef1,#dcdde2);border:1px solid #adafb7;border-bottom:none"></div>
<div class="t" style="left:645px;top:249px;color:#40424f" id="dt1">Item Meters</div>
<div class="a" style="left:713px;top:245px;width:89px;height:20px;background:linear-gradient(#eeeef1,#dcdde2);border:1px solid #adafb7;border-bottom:none"></div>
<div class="t" style="left:720px;top:249px;color:#40424f" id="dt2">Item Inclusions</div>
<div class="a" style="left:802px;top:242px;width:88px;height:24px;background:#fff;border:1px solid #a5a7b0;border-bottom:none"></div>
<div class="t" style="left:811px;top:248px;color:#1c1c2c" id="dt3">Item Contacts</div>
<div class="a" style="left:568px;top:266px;width:758px;height:20px;background:linear-gradient(#fafafc,#ededf1)"></div>
<div class="a" style="left:568px;top:285px;width:758px;height:1px;background:#c2c4cb"></div>
<div class="a" style="left:568px;top:286px;width:758px;height:63px;background:#f1f1f4"></div>
<div class="a" style="left:568px;top:286px;width:16px;height:20px;background:#f1f1f4"></div>
<div class="a" style="left:584px;top:286px;width:106px;height:20px;background:#e8e8ea"></div>
<div class="t" style="left:587px;top:289px;color:#1c1c2c" id="dd0_1">Jane Alrich</div>
<div class="a" style="left:690px;top:286px;width:122px;height:20px;background:#fdfde1"></div>
<div class="t" style="left:693px;top:289px;color:#1c1c2c" id="dd0_2">Meter Clicks Contact</div>
<div class="a" style="left:812px;top:286px;width:99px;height:20px;background:#fdfde1"></div>
<div class="t" style="left:815px;top:289px;color:#1c1c2c" id="dd0_3">Email</div>
<div class="a" style="left:911px;top:286px;width:99px;height:20px;background:#e8e8ea"></div>
<div class="t" style="left:914px;top:289px;color:#1c1c2c" id="dd0_4">judith.mudzengi...</div>
<div class="a" style="left:1010px;top:286px;width:126px;height:20px;background:#e8e8ea"></div>
<div class="t" style="left:1013px;top:289px;color:#1c1c2c" id="dd0_5">031 123 4567</div>
<div class="a" style="left:1136px;top:286px;width:101px;height:20px;background:#e8e8ea"></div>
<div class="t" style="left:1139px;top:289px;color:#1c1c2c" id="dd0_6">083 456 7891</div>
<div class="a" style="left:1237px;top:286px;width:83px;height:20px;background:#fdfde1"></div>
<div class="a" style="left:1320px;top:286px;width:6px;height:20px;background:#f3f3f6"></div>
<div class="a" style="left:568px;top:306px;width:758px;height:1px;background:#d6d7dd"></div>
<div class="a" style="left:568px;top:307px;width:16px;height:20px;background:#f1f1f4"></div>
<div class="a" style="left:584px;top:307px;width:106px;height:20px;background:#efeff2"></div>
<div class="t" style="left:587px;top:310px;color:#1c1c2c" id="dd1_1">Mandy Jefferson</div>
<div class="a" style="left:690px;top:307px;width:122px;height:20px;background:#efeff2"></div>
<div class="t" style="left:693px;top:310px;color:#1c1c2c" id="dd1_2">User Contact</div>
<div class="a" style="left:812px;top:307px;width:99px;height:20px;background:#fff"></div>
<div class="t" style="left:815px;top:310px;color:#1c1c2c" id="dd1_3">Email</div>
<div class="a" style="left:911px;top:307px;width:99px;height:20px;background:#efeff2"></div>
<div class="t" style="left:914px;top:310px;color:#1c1c2c" id="dd1_4">judith.mudzengi...</div>
<div class="a" style="left:1010px;top:307px;width:126px;height:20px;background:#efeff2"></div>
<div class="t" style="left:1013px;top:310px;color:#1c1c2c" id="dd1_5">031 555 1234</div>
<div class="a" style="left:1136px;top:307px;width:101px;height:20px;background:#efeff2"></div>
<div class="t" style="left:1139px;top:310px;color:#1c1c2c" id="dd1_6">083 555 1234</div>
<div class="a" style="left:1237px;top:307px;width:83px;height:20px;background:#efeff2"></div>
<div class="a" style="left:1320px;top:307px;width:6px;height:20px;background:#f3f3f6"></div>
<div class="a" style="left:568px;top:327px;width:758px;height:1px;background:#d6d7dd"></div>
<div class="a" style="left:568px;top:328px;width:16px;height:20px;background:#f1f1f4"></div>
<div class="a" style="left:584px;top:328px;width:106px;height:20px;background:#20b2aa"></div>
<div class="a" style="left:690px;top:328px;width:122px;height:20px;background:#fdfde1"></div>
<div class="t" style="left:693px;top:331px;color:#1c1c2c" id="dd2_2">Select contract type...</div>
<div class="a" style="left:812px;top:328px;width:99px;height:20px;background:#fdfde1"></div>
<div class="t" style="left:815px;top:331px;color:#1c1c2c" id="dd2_3">Select method...</div>
<div class="a" style="left:911px;top:328px;width:99px;height:20px;background:#20b2aa"></div>
<div class="a" style="left:1010px;top:328px;width:126px;height:20px;background:#20b2aa"></div>
<div class="a" style="left:1136px;top:328px;width:101px;height:20px;background:#20b2aa"></div>
<div class="a" style="left:1237px;top:328px;width:83px;height:20px;background:#fdfde1"></div>
<div class="a" style="left:1320px;top:328px;width:6px;height:20px;background:#f3f3f6"></div>
<div class="a" style="left:568px;top:348px;width:758px;height:1px;background:#d6d7dd"></div>
<div class="a" style="left:583px;top:266px;width:1px;height:83px;background:#d3d5db"></div>
<div class="t" style="left:587px;top:268px;color:#1c1c2c" id="dh1">ContactName</div>
<div class="a" style="left:689px;top:266px;width:1px;height:83px;background:#d3d5db"></div>
<div class="t" style="left:693px;top:268px;color:#1c1c2c" id="dh2">ContactType</div>
<div class="a" style="left:811px;top:266px;width:1px;height:83px;background:#d3d5db"></div>
<div class="t" style="left:815px;top:268px;color:#1c1c2c" id="dh3">ContactMethod</div>
<div class="a" style="left:910px;top:266px;width:1px;height:83px;background:#d3d5db"></div>
<div class="t" style="left:914px;top:268px;color:#1c1c2c" id="dh4">ContactEmail</div>
<div class="a" style="left:1009px;top:266px;width:1px;height:83px;background:#d3d5db"></div>
<div class="t" style="left:1013px;top:268px;color:#1c1c2c" id="dh5">ContactPhoneNumber</div>
<div class="a" style="left:1135px;top:266px;width:1px;height:83px;background:#d3d5db"></div>
<div class="t" style="left:1139px;top:268px;color:#1c1c2c" id="dh6">ContactMobile</div>
<div class="a" style="left:1236px;top:266px;width:1px;height:83px;background:#d3d5db"></div>
<div class="t" style="left:1240px;top:268px;color:#1c1c2c" id="dh7">IsMeterContact</div>
<div class="a" style="left:1319px;top:266px;width:1px;height:83px;background:#d3d5db"></div>
<div class="a" style="left:1009px;top:328px;width:1px;height:20px;background:#dfe9ea"></div>
<div class="a" style="left:1135px;top:328px;width:1px;height:20px;background:#dfe9ea"></div>
<div class="a" style="left:567px;top:266px;width:1px;height:83px;background:#b6b8bf"></div>
<div class="a" style="left:1325px;top:266px;width:1px;height:84px;background:#c2c4cb"></div>
<div class="a" style="left:567px;top:349px;width:759px;height:1px;background:#aeb0b8"></div>
<div class="a" style="left:567px;top:350px;width:759px;height:1px;background:#dcdde1"></div>
<svg class="a" style="left:798px;top:273px" width="7" height="4"><polygon points="3.5,0 7,4 0,4" fill="#1c1c2c"/></svg>
<svg class="a" style="left:571px;top:270px" width="9" height="9" viewBox="0 0 9 9"><circle cx="3.2" cy="3.2" r="2.3" fill="none" stroke="#2a2a38" stroke-width="1.2"/><path d="M5 5 L8.3 8.3" stroke="#2a2a38" stroke-width="1.6"/></svg>
<div class="a" style="left:566px;top:306px;width:20px;height:23px;border:3px solid #000;background:#f6f6f8"></div>
<svg class="a" style="left:574px;top:313px" width="5" height="9"><polygon points="0,0 5,4.5 0,9" fill="#1c1c2c"/></svg>
<svg class="a" style="left:571.5px;top:335px" width="8" height="8" viewBox="0 0 9 9"><path d="M4.5 0.5 V8.5 M0.5 4.5 H8.5 M1.7 1.7 L7.3 7.3 M7.3 1.7 L1.7 7.3" stroke="#15151f" stroke-width="1.15"/><circle cx="4.5" cy="4.5" r="0.9" fill="#f1f1f4"/></svg>
<div class="a" style="left:1272px;top:289px;width:13px;height:13px;background:linear-gradient(135deg,#d8d9de,#f4f4f6);border:1px solid #8e9099"></div>
<svg class="a" style="left:1272px;top:285px" width="15" height="16" viewBox="0 0 15 16"><path d="M2.5 8.5 L5.5 13 L13 1.5" stroke="#1a1a22" stroke-width="1.8" fill="none"/></svg>
<div class="a" style="left:1272px;top:310px;width:13px;height:13px;background:#fff;border:1px solid #8e9099;box-shadow:inset 1px 1px 0 #d5d6db"></div>
<div class="a" style="left:1272px;top:331px;width:13px;height:13px;background:#eef0f6;border:1px solid #8e9099"></div>
<div class="a" style="left:1274px;top:333px;width:9px;height:9px;background:linear-gradient(135deg,#9db8f2,#6489de);border:1px solid #5877c9"></div>
<div class="a" style="left:529px;top:354px;width:802px;height:1px;background:#b9bbc3"></div>
<div class="a" style="left:529px;top:355px;width:16px;height:20px;background:#f1f1f4"></div>
<div class="a" style="left:545px;top:355px;width:553px;height:20px;background:#20b2aa"></div>
<div class="a" style="left:1098px;top:355px;width:233px;height:20px;background:#fdfde1"></div>
<div class="a" style="left:544px;top:355px;width:1px;height:20px;background:#d3d5db"></div>
<div class="a" style="left:626px;top:355px;width:1px;height:20px;background:#dfe9ea"></div>
<div class="a" style="left:732px;top:355px;width:1px;height:20px;background:#dfe9ea"></div>
<div class="a" style="left:808px;top:355px;width:1px;height:20px;background:#dfe9ea"></div>
<div class="a" style="left:885px;top:355px;width:1px;height:20px;background:#dfe9ea"></div>
<div class="a" style="left:947px;top:355px;width:1px;height:20px;background:#dfe9ea"></div>
<div class="a" style="left:1024px;top:355px;width:1px;height:20px;background:#dfe9ea"></div>
<div class="a" style="left:1097px;top:355px;width:1px;height:20px;background:#e3e3cf"></div>
<div class="a" style="left:1157px;top:355px;width:1px;height:20px;background:#e3e3cf"></div>
<div class="a" style="left:529px;top:375px;width:802px;height:1px;background:#d6d7dd"></div>
<svg class="a" style="left:532.5px;top:361.5px" width="8" height="8" viewBox="0 0 9 9"><path d="M4.5 0.5 V8.5 M0.5 4.5 H8.5 M1.7 1.7 L7.3 7.3 M7.3 1.7 L1.7 7.3" stroke="#15151f" stroke-width="1.15"/><circle cx="4.5" cy="4.5" r="0.9" fill="#f1f1f4"/></svg>
<div class="a" style="left:529px;top:657px;width:802px;height:1px;background:#c2c4cb"></div>
<div class="a" style="left:529px;top:658px;width:802px;height:29px;background:linear-gradient(#eaeaee,#e3e4e8)"></div>
<div class="a" style="left:529px;top:687px;width:802px;height:17px;background:#f5f5f8"></div>
<div class="a" style="left:546px;top:692px;width:481px;height:7px;background:linear-gradient(#e4e5ea,#d6d7de);border:1px solid #a9abb4;border-radius:4px"></div>
<svg class="a" style="left:535px;top:691px" width="4" height="9"><polygon points="4,0 4,9 0,4.5" fill="#6d707c"/></svg>
<svg class="a" style="left:1320px;top:691px" width="4" height="9"><polygon points="0,0 4,4.5 0,9" fill="#6d707c"/></svg>
<!-- status bar -->
<div class="a" style="left:4px;top:705px;width:1329px;height:28px;background:linear-gradient(#cfd0d5 0,#e2e3e6 1px,#dcdde1 4px,#c9cacf 100%);border-left:1px solid #b4b6bd;border-right:1px solid #b4b6bd;border-bottom:1px solid #a9abb3"></div>
<div class="a" style="left:2px;top:733px;width:1333px;height:3px;background:#e4e5e8"></div>
<div class="a" style="left:2px;top:2px;width:2px;height:734px;background:linear-gradient(#ececef,#e6e7ea)"></div>
<div class="a" style="left:1333px;top:2px;width:2px;height:734px;background:linear-gradient(#ececef,#e6e7ea)"></div>
<div class="t" style="left:12px;top:712px;color:#1c1c2c" id="s0">Open Windows</div>
<svg class="a" style="left:88px;top:717px" width="7" height="4"><polygon points="0,0 7,0 3.5,4" fill="#1c1c2c"/></svg>
<div class="a sep" style="left:880px"></div>
<div class="t" style="left:890px;top:712px;color:#1c1c2c" id="s1">User : JudithM</div>
<div class="a sep" style="left:968px"></div>
<div class="t" style="left:977px;top:712px;color:#1c1c2c" id="s2">04/12/2019</div>
<div class="a sep" style="left:1041px"></div>
<div class="t" style="left:1050px;top:712px;color:#1c1c2c" id="s3">Version : 2.3.0.4</div>
<div class="a sep" style="left:1139px"></div>
<div class="t" style="left:1147px;top:712px;color:#1c1c2c" id="s4">TEST ALPHA - JUDITH PC LOCAL</div>
<svg class="a" style="left:1319px;top:720px" width="12" height="12" viewBox="0 0 12 12"><path d="M1 11 L11 1 M5 11 L11 5 M9 11 L11 9" stroke="#8e9099" stroke-width="1"/></svg>
</div>
</body></html>
